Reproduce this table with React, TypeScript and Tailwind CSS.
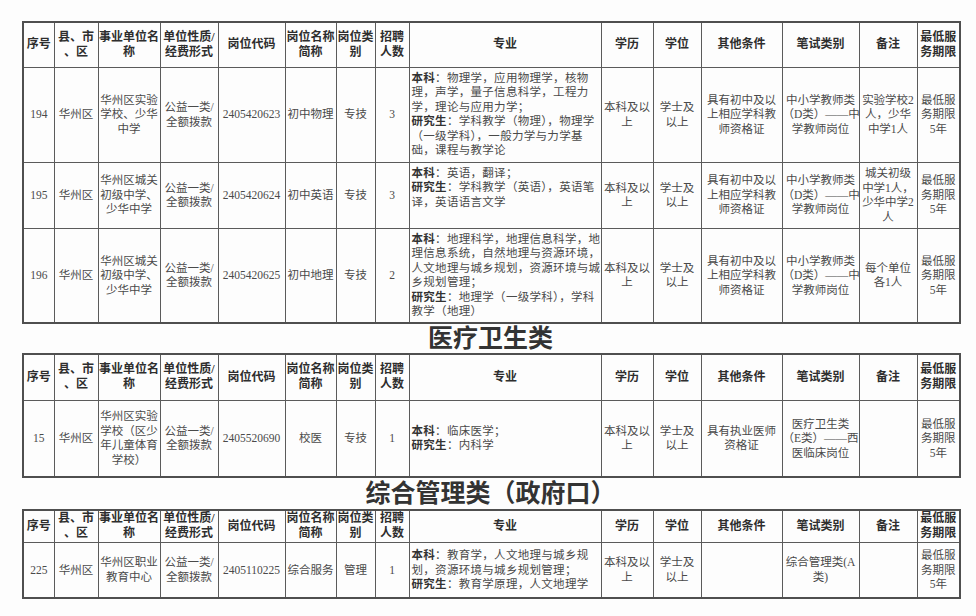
import type { ReactNode } from 'react';

const widths = [31, 44, 62, 58, 67, 51, 39, 34, 192, 52, 48, 81, 77, 58, 43];

const headers: string[][] = [
  ['序号'],
  ['县、市', '、区'],
  ['事业单位名', '称'],
  ['单位性质/', '经费形式'],
  ['岗位代码'],
  ['岗位名称', '简称'],
  ['岗位类', '别'],
  ['招聘', '人数'],
  ['专业'],
  ['学历'],
  ['学位'],
  ['其他条件'],
  ['笔试类别'],
  ['备注'],
  ['最低服', '务期限'],
];

type Row = {
  height: number;
  majorAlign: 'top' | 'middle';
  cells: string[][];
  major: { label: string; lines: string[] }[];
};

const teachRows: Row[] = [
  {
    height: 95,
    majorAlign: 'top',
    cells: [
      ['194'],
      ['华州区'],
      ['华州区实验', '学校、少华', '中学'],
      ['公益一类/', '全额拨款'],
      ['2405420623'],
      ['初中物理'],
      ['专技'],
      ['3'],
      ['本科及以', '上'],
      ['学士及', '以上'],
      ['具有初中及以', '上相应学科教', '师资格证'],
      ['中小学教师类', '（D类）——中', '学教师岗位'],
      ['实验学校2', '人，少华', '中学1人'],
      ['最低服', '务期限', '5年'],
    ],
    major: [
      { label: '本科', lines: ['：物理学，应用物理学，核物', '理，声学，量子信息科学，工程力', '学，理论与应用力学；'] },
      { label: '研究生', lines: ['：学科教学（物理），物理学', '（一级学科），一般力学与力学基', '础，课程与教学论'] },
    ],
  },
  {
    height: 66,
    majorAlign: 'top',
    cells: [
      ['195'],
      ['华州区'],
      ['华州区城关', '初级中学、', '少华中学'],
      ['公益一类/', '全额拨款'],
      ['2405420624'],
      ['初中英语'],
      ['专技'],
      ['3'],
      ['本科及以', '上'],
      ['学士及', '以上'],
      ['具有初中及以', '上相应学科教', '师资格证'],
      ['中小学教师类', '（D类）——中', '学教师岗位'],
      ['城关初级', '中学1人，', '少华中学2', '人'],
      ['最低服', '务期限', '5年'],
    ],
    major: [
      { label: '本科', lines: ['：英语，翻译；'] },
      { label: '研究生', lines: ['：学科教学（英语），英语笔', '译，英语语言文学'] },
    ],
  },
  {
    height: 95,
    majorAlign: 'top',
    cells: [
      ['196'],
      ['华州区'],
      ['华州区城关', '初级中学、', '少华中学'],
      ['公益一类/', '全额拨款'],
      ['2405420625'],
      ['初中地理'],
      ['专技'],
      ['2'],
      ['本科及以', '上'],
      ['学士及', '以上'],
      ['具有初中及以', '上相应学科教', '师资格证'],
      ['中小学教师类', '（D类）——中', '学教师岗位'],
      ['每个单位', '各1人'],
      ['最低服', '务期限', '5年'],
    ],
    major: [
      {
        label: '本科',
        lines: ['：地理科学，地理信息科学，地', '理信息系统，自然地理与资源环境，', '人文地理与城乡规划，资源环境与城', '乡规划管理；'],
      },
      { label: '研究生', lines: ['：地理学（一级学科），学科', '教学（地理）'] },
    ],
  },
];

const medRows: Row[] = [
  {
    height: 77,
    majorAlign: 'middle',
    cells: [
      ['15'],
      ['华州区'],
      ['华州区实验', '学校（区少', '年儿童体育', '学校）'],
      ['公益一类/', '全额拨款'],
      ['2405520690'],
      ['校医'],
      ['专技'],
      ['1'],
      ['本科及以', '上'],
      ['学士及', '以上'],
      ['具有执业医师', '资格证'],
      ['医疗卫生类', '（E类）——西', '医临床岗位'],
      [],
      ['最低服', '务期限', '5年'],
    ],
    major: [
      { label: '本科', lines: ['：临床医学；'] },
      { label: '研究生', lines: ['：内科学'] },
    ],
  },
];

const adminRows: Row[] = [
  {
    height: 56,
    majorAlign: 'middle',
    cells: [
      ['225'],
      ['华州区'],
      ['华州区职业', '教育中心'],
      ['公益一类/', '全额拨款'],
      ['2405110225'],
      ['综合服务'],
      ['管理'],
      ['1'],
      ['本科及以', '上'],
      ['学士及', '以上'],
      [],
      ['综合管理类(A', '类)'],
      [],
      ['最低服', '务期限', '5年'],
    ],
    major: [
      { label: '本科', lines: ['：教育学，人文地理与城乡规', '划，资源环境与城乡规划管理；'] },
      { label: '研究生', lines: ['：教育学原理，人文地理学'] },
    ],
  },
];

function Lines({ lines }: { lines: string[] }) {
  return (
    <>
      {lines.map((line, i) => (
        <div key={i} className="whitespace-nowrap">
          {line}
        </div>
      ))}
    </>
  );
}

function Cell({ children }: { children: ReactNode }) {
  return <td className="border border-[#5b5b5b] p-0 text-center align-middle">{children}</td>;
}

function JobTable({ headerHeight, rows }: { headerHeight: number; rows: Row[] }) {
  return (
    <table className="w-[937px] table-fixed border-collapse border-2 border-[#4f4f4f]">
      <colgroup>
        {widths.map((w, i) => (
          <col key={i} style={{ width: w }} />
        ))}
      </colgroup>
      <thead>
        <tr style={{ height: headerHeight }}>
          {headers.map((lines, i) => (
            <th
              key={i}
              className="border border-[#5b5b5b] p-0 text-center align-middle text-[12px] font-bold leading-[15px] text-[#2e2e2e]"
            >
              <Lines lines={lines} />
            </th>
          ))}
        </tr>
      </thead>
      <tbody>
        {rows.map((row, r) => (
          <tr key={r} style={{ height: row.height }} className="text-[11.5px] leading-[14.5px] text-[#4a4a4a]">
            {row.cells.slice(0, 8).map((lines, i) => (
              <Cell key={i}>
                <Lines lines={lines} />
              </Cell>
            ))}
            <td
              className={`border border-[#5b5b5b] px-[2px] py-[3px] text-left tracking-[0.3px] ${
                row.majorAlign === 'top' ? 'align-top' : 'align-middle'
              }`}
            >
              {row.major.map((part, p) =>
                part.lines.map((line, l) => (
                  <div key={`${p}-${l}`} className="whitespace-nowrap">
                    {l === 0 ? <span className="font-bold text-[#333]">{part.label}</span> : null}
                    {line}
                  </div>
                )),
              )}
            </td>
            {row.cells.slice(8).map((lines, i) => (
              <Cell key={i + 8}>
                <Lines lines={lines} />
              </Cell>
            ))}
          </tr>
        ))}
      </tbody>
    </table>
  );
}

function SectionTitle({ text, height }: { text: string; height: number }) {
  return (
    <div
      className="w-[937px] text-center text-[25px] font-bold text-[#333]"
      style={{ height, lineHeight: `${height}px` }}
    >
      {text}
    </div>
  );
}

export default function App() {
  return (
    <div className="min-h-[616px] w-[976px] bg-[#fdfdfd] pl-[22px] pt-[21px] font-['Liberation_Serif','Noto_Sans_CJK_SC',serif]">
      <JobTable headerHeight={45} rows={teachRows} />
      <SectionTitle text="医疗卫生类" height={29} />
      <JobTable headerHeight={46} rows={medRows} />
      <SectionTitle text="综合管理类（政府口）" height={31} />
      <JobTable headerHeight={32} rows={adminRows} />
    </div>
  );
}
